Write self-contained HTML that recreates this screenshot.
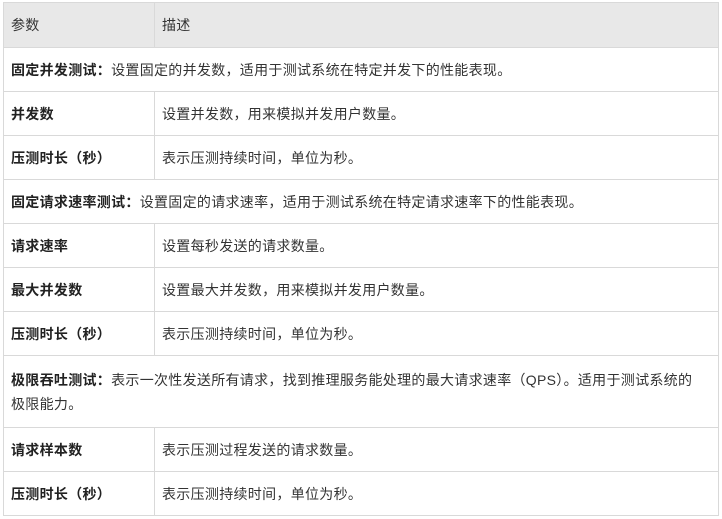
<!DOCTYPE html>
<html><head><meta charset="utf-8"><style>
body{margin:0;background:#fff;width:722px;height:519px;overflow:hidden}
table{position:absolute;left:3px;top:2px;width:716px;border-collapse:collapse;table-layout:fixed;font-family:"Liberation Sans","Noto Sans CJK SC",sans-serif;font-size:14px;color:#333;letter-spacing:0.3px}
td{border:1px solid #d9d9d9;padding:0 6px 0 7px;height:43px;line-height:24px;vertical-align:middle}
tr.h td{background:#e8e8e8;height:44px}
b{font-weight:bold;color:#222}
</style></head><body>
<table>
<colgroup><col style="width:151px"><col></colgroup>
<tr class="h"><td>参数</td><td>描述</td></tr>
<tr><td colspan="2"><b>固定并发测试：</b>设置固定的并发数，适用于测试系统在特定并发下的性能表现。</td></tr>
<tr><td><b>并发数</b></td><td>设置并发数，用来模拟并发用户数量。</td></tr>
<tr><td><b>压测时长（秒）</b></td><td>表示压测持续时间，单位为秒。</td></tr>
<tr><td colspan="2"><b>固定请求速率测试：</b>设置固定的请求速率，适用于测试系统在特定请求速率下的性能表现。</td></tr>
<tr><td><b>请求速率</b></td><td>设置每秒发送的请求数量。</td></tr>
<tr><td><b>最大并发数</b></td><td>设置最大并发数，用来模拟并发用户数量。</td></tr>
<tr><td><b>压测时长（秒）</b></td><td>表示压测持续时间，单位为秒。</td></tr>
<tr><td colspan="2" style="height:71px"><b>极限吞吐测试：</b>表示一次性发送所有请求，找到推理服务能处理的最大请求速率（QPS）。适用于测试系统的<br>极限能力。</td></tr>
<tr><td><b>请求样本数</b></td><td>表示压测过程发送的请求数量。</td></tr>
<tr><td><b>压测时长（秒）</b></td><td>表示压测持续时间，单位为秒。</td></tr>
</table>
</body></html>
